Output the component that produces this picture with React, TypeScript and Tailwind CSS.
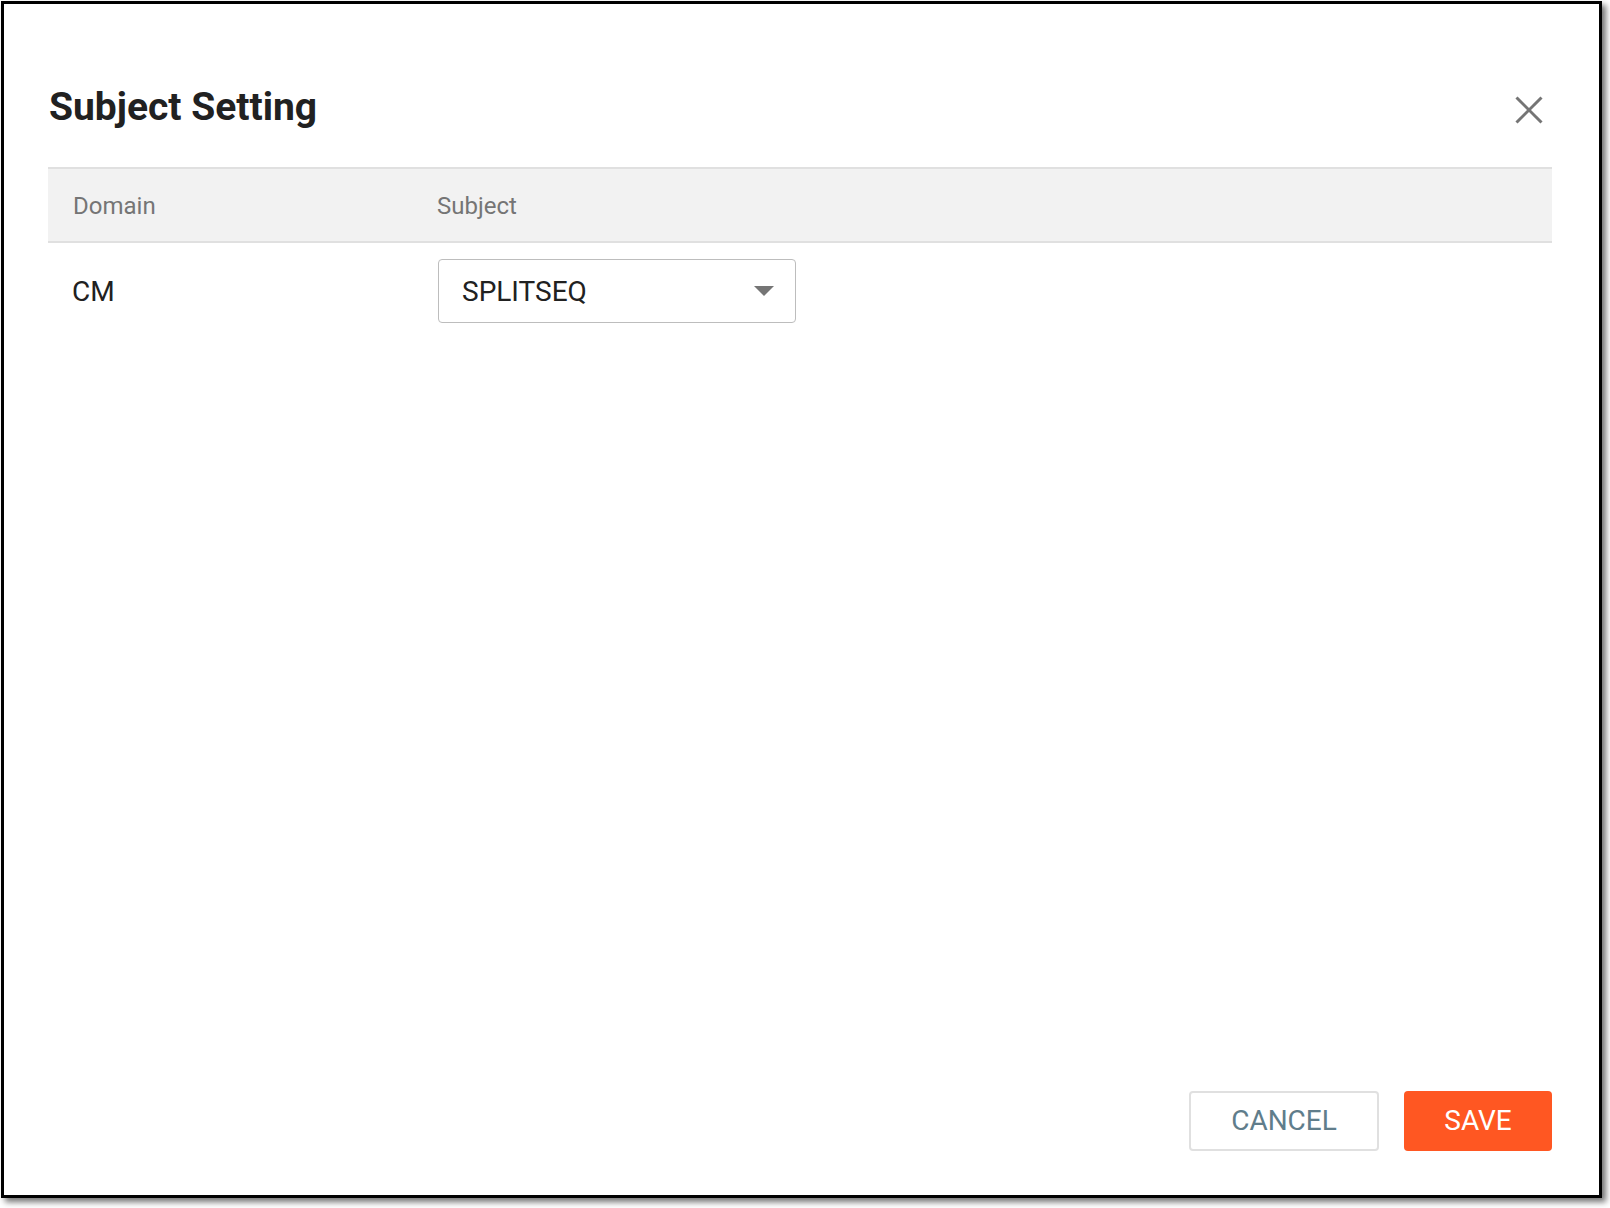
import React from 'react';

const CloseIcon: React.FC = () => (
    <svg width="28" height="28" viewBox="0 0 28 28" fill="none" stroke="#757575" strokeWidth="3">
        <line x1="1.5" y1="1.5" x2="26.5" y2="26.5" />
        <line x1="26.5" y1="1.5" x2="1.5" y2="26.5" />
    </svg>
);

const App: React.FC = () => {
    return (
        <div className="w-[1610px] h-[1208px] bg-white pt-px pl-px" style={{ fontFamily: 'Roboto, "Noto Sans", sans-serif' }}>
            <div className="w-[1601px] h-[1197px] border-[3px] border-black bg-white shadow-[4px_4px_6px_rgba(0,0,0,0.55)] flex flex-col pl-[44px] pr-[47px] pb-[44px]">
                <div className="flex items-center justify-between pt-[84px]">
                    <h2 className="text-[39px] leading-[39px] font-bold text-[#212121] ml-px">Subject Setting</h2>
                    <button className="mr-[9px] mt-[4px]">
                        <CloseIcon />
                    </button>
                </div>

                <div className="mt-[40px]">
                    <div className="flex items-center h-[76px] bg-[#f2f2f2] border-y-2 border-[#e0e0e0] text-[24px] text-[#757575]">
                        <div className="w-[365px] pl-[25px] pt-px">Domain</div>
                        <div className="pl-[24px] pt-px">Subject</div>
                    </div>
                    <div className="flex items-center pt-[16px]">
                        <div className="w-[365px] pl-[24px] pt-[2px] text-[28px] text-[#212121]">CM</div>
                        <div className="pl-[25px]">
                            <div className="w-[358px] h-[64px] border-[1.5px] border-[#bdbdbd] rounded-[4px] flex items-center justify-between pl-[23px] pr-[21px]">
                                <span className="text-[28px] text-[#212121] pt-[2px]">SPLITSEQ</span>
                                <svg width="20" height="10" viewBox="0 0 20 10">
                                    <path d="M0 0 L20 0 L10 10 Z" fill="#757575" />
                                </svg>
                            </div>
                        </div>
                    </div>
                </div>

                <div className="flex-1" />

                <div className="flex justify-end items-start gap-[25px]">
                    <button className="w-[190px] h-[60px] border-2 border-[#e0e0e0] rounded-[4px] text-[28px] text-[#607d8b] bg-white">
                        CANCEL
                    </button>
                    <button className="w-[148px] h-[60px] bg-[#ff5722] rounded-[4px] text-[28px] text-white">
                        SAVE
                    </button>
                </div>
            </div>
        </div>
    );
};

export default App;
